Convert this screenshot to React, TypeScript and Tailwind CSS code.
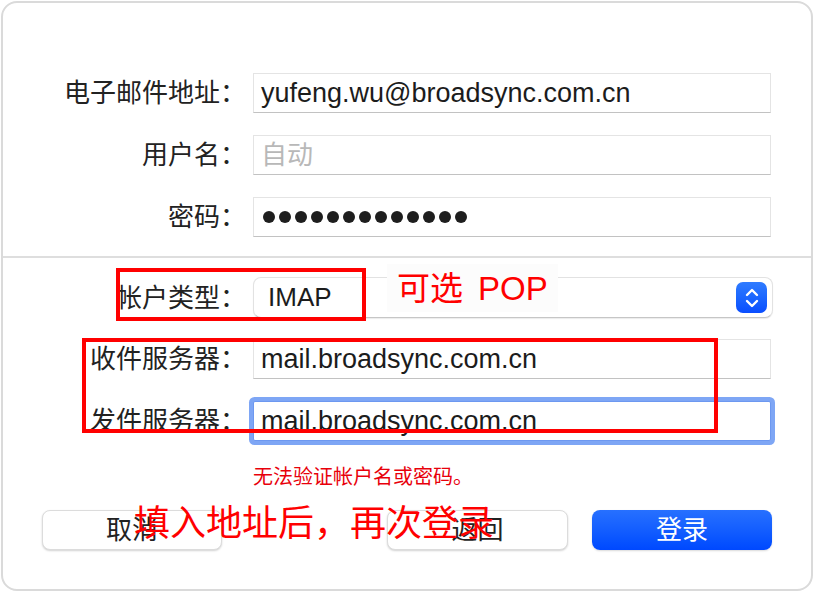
import React from 'react';

const font = "font-['Liberation_Sans','Noto_Sans_CJK_SC',sans-serif]";

const Field: React.FC<{ children?: React.ReactNode; focused?: boolean }> = ({ children, focused }) => (
    <div
        className={`w-[518px] h-[40px] bg-white flex items-center pl-[7px] border ${
            focused
                ? 'border-[#6d98f0] rounded-[2px] shadow-[0_0_0_4px_#7ea6f5]'
                : 'border-[#e4e4e4] border-b-[#c2c2c2]'
        }`}
    >
        {children}
    </div>
);

const Row: React.FC<{ label: string; children: React.ReactNode; className?: string }> = ({ label, children, className }) => (
    <div className={`flex items-center ${className ?? ''}`}>
        <div className="w-[243px] text-right text-[26px] leading-none text-[#222]">{label}</div>
        <div className="ml-[7px]">{children}</div>
    </div>
);

const App: React.FC = () => {
    return (
        <div className={`w-[814px] h-[592px] bg-white pt-[1px] pl-[1px] ${font}`}>
            <div className="relative w-[812px] h-[590px] rounded-[16px] border-2 border-[#dadada] bg-white flex flex-col">
                <div className="pt-[70px] flex flex-col gap-[22px]">
                    <Row label="电子邮件地址：">
                        <Field>
                            <span className="text-[27px] text-[#1c1c1c]">yufeng.wu@broadsync.com.cn</span>
                        </Field>
                    </Row>
                    <Row label="用户名：">
                        <Field>
                            <span className="text-[26px] text-[#b8b8b8]">自动</span>
                        </Field>
                    </Row>
                    <Row label="密码：">
                        <Field>
                            <div className="flex gap-[4px] pl-[2px]">
                                {Array.from({ length: 13 }).map((_, i) => (
                                    <span key={i} className="w-[12px] h-[12px] rounded-full bg-[#1e1e1e]" />
                                ))}
                            </div>
                        </Field>
                    </Row>
                </div>

                <div className="mt-[19px] h-[2px] bg-[#dedede]" />

                <Row label="帐户类型：" className="mt-[19px]">
                    <div className="w-[520px] h-[41px] rounded-[8px] border border-[#e2e2e2] border-b-[#c6c6c6] bg-white shadow-[0_1px_1px_rgba(0,0,0,0.08)] flex items-center justify-between pl-[14px] pr-[5px]">
                        <span className="text-[26px] text-[#1c1c1c]">IMAP</span>
                        <div className="w-[31px] h-[31px] rounded-[7px] bg-gradient-to-b from-[#2f7bff] to-[#0a4dff] flex items-center justify-center">
                            <svg width="16" height="22" viewBox="0 0 16 22" fill="none" stroke="white" strokeWidth="2.4" strokeLinecap="round" strokeLinejoin="round">
                                <path d="M3 8 L8 3 L13 8" />
                                <path d="M3 14 L8 19 L13 14" />
                            </svg>
                        </div>
                    </div>
                </Row>

                <Row label="收件服务器：" className="mt-[21px]">
                    <Field>
                        <span className="text-[27px] text-[#1c1c1c]">mail.broadsync.com.cn</span>
                    </Field>
                </Row>

                <Row label="发件服务器：" className="mt-[22px]">
                    <Field focused>
                        <span className="text-[27px] text-[#1c1c1c]">mail.broadsync.com.cn</span>
                    </Field>
                </Row>

                <div className="mt-[24px] ml-[250px] text-[20px] leading-[24px] text-[#e8000b]">无法验证帐户名或密码。</div>

                <div className="mt-[21px] flex items-center">
                    <button className="ml-[39px] w-[180px] h-[40px] rounded-[8px] bg-white border border-[#dcdcdc] shadow-[0_1px_2px_rgba(0,0,0,0.18)] text-[26px] text-[#222] flex items-center justify-center">
                        取消
                    </button>
                    <button className="ml-[165px] w-[181px] h-[40px] rounded-[8px] bg-white border border-[#dcdcdc] shadow-[0_1px_2px_rgba(0,0,0,0.18)] text-[26px] text-[#222] flex items-center justify-center">
                        返回
                    </button>
                    <button className="ml-[24px] w-[180px] h-[40px] rounded-[8px] bg-gradient-to-b from-[#2770ff] to-[#0048ff] shadow-[0_1px_2px_rgba(0,0,0,0.15)] text-[26px] text-white flex items-center justify-center">
                        登录
                    </button>
                </div>

                {/* annotations */}
                <div className="absolute left-[113px] top-[265px] w-[250px] h-[53px] border-4 border-[#ff0000]" />
                <div className="absolute left-[79px] top-[335px] w-[636px] h-[95px] border-4 border-[#ff0000]" />
                <div className="absolute left-[384px] top-[261px] h-[48px] flex items-center px-[10px] bg-[#fcfcfc] text-[33px] text-[#ff0000] leading-none">
                    <span>可选</span>
                    <span className="ml-[15px]">POP</span>
                </div>
                <span className="absolute left-[107px] top-[487px] h-[68px] flex items-center px-[24px] text-[36px] text-[#ff0000] leading-none">
                    填入地址后，再次登录
                </span>
            </div>
        </div>
    );
};

export default App;
